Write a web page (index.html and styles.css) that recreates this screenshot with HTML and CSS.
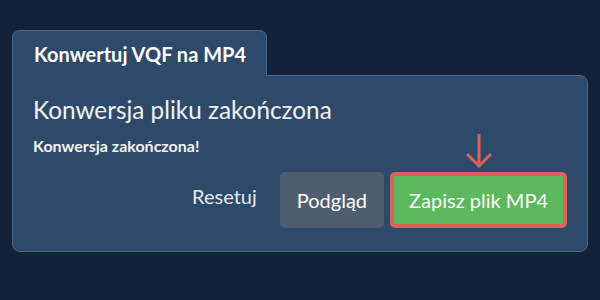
FILE: index.html
```html
<!DOCTYPE html>
<html lang="pl">

<head>
    <meta charset="UTF-8">
    <meta name="viewport" content="width=device-width, initial-scale=1.0">
    <title>Konwertuj VQF na MP4</title>
    <link rel="stylesheet" href="styles.css">
</head>

<body>
    <div class="converter">
        <div class="tab">Konwertuj VQF na MP4</div>
        <div class="panel">
            <h1 class="title">Konwersja pliku zakończona</h1>
            <p class="status">Konwersja zakończona!</p>
            <div class="actions">
                <a class="btn btn-link">Resetuj</a>
                <a class="btn btn-grey">Podgląd</a>
                <div class="save">
                    <svg class="arrow" width="26" height="36" viewBox="0 0 26 36">
                        <path d="M13 1 V33 M1 21 L13 33 L25 21" fill="none" stroke="#e0605a" stroke-width="3" />
                    </svg>
                    <a class="btn btn-green">Zapisz plik MP4</a>
                </div>
            </div>
        </div>
    </div>
</body>

</html>
```

FILE: styles.css
```css
* {
    margin: 0;
    padding: 0;
    box-sizing: border-box;
}

body {
    background: #11233a;
    font-family: Lato, "Liberation Sans", sans-serif;
    color: #f2f2f2;
}

.converter {
    padding: 30px 12px 0;
}

.tab {
    display: inline-block;
    position: relative;
    z-index: 2;
    margin-bottom: -1px;
    padding: 11px 20px 10px 21px;
    font-size: 20px;
    line-height: 24px;
    font-weight: bold;
    color: #fff;
    background: #2d4a6a;
    border: 1px solid #4a6888;
    border-bottom: none;
    border-radius: 8px 8px 0 0;
}

.panel {
    background: #2d4a6a;
    border: 1px solid #4a6888;
    border-radius: 0 8px 8px 8px;
    padding: 19px 20px 19px 20px;
}

.title {
    font-size: 24.3px;
    line-height: 29px;
    font-weight: normal;
}

.status {
    margin-top: 12px;
    font-size: 16px;
    line-height: 19px;
    font-weight: bold;
}

.actions {
    margin-top: 13px;
    display: flex;
    justify-content: flex-end;
    align-items: center;
}

.btn {
    display: block;
    font-size: 20px;
    line-height: 24px;
    padding: 12px 13px;
    border: 4px solid transparent;
    border-radius: 5px;
    color: #fff;
}

.btn-link {
    padding-bottom: 20px;
    margin-right: 6px;
    color: #e4e8ee;
}

.btn-grey {
    background: #4f5e6e;
    border-color: #4f5e6e;
    margin-right: 6px;
}

.save {
    position: relative;
}

.btn-green {
    padding: 12px 15px;
    background: #5cb85c;
    border-color: #e0605a;
}

.arrow {
    position: absolute;
    left: 50%;
    margin-left: -13px;
    bottom: 100%;
    margin-bottom: 3px;
}
```
